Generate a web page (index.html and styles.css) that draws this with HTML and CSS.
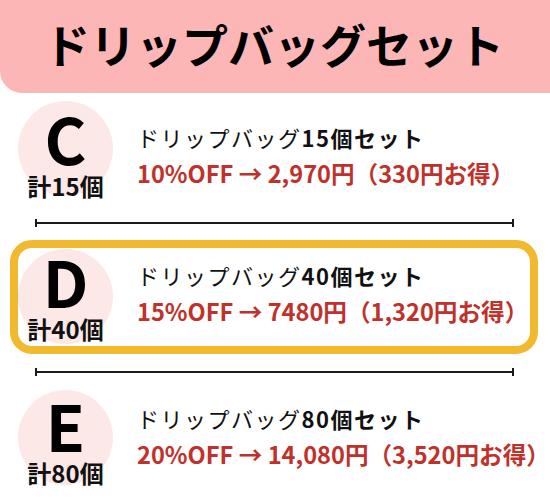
FILE: index.html
```html
<!DOCTYPE html>
<html lang="ja">
<head>
<meta charset="utf-8">
<link rel="stylesheet" href="styles.css">
</head>
<body>
<header class="header"><h1 class="header-title">ドリップバッグセット</h1></header>
<main class="list">
  <section class="row row-c">
    <div class="badge"><span class="badge-letter">C</span><span class="badge-count">計15個</span></div>
    <div class="info">
      <p class="info-title">ドリップバッグ<b>15個セット</b></p>
      <p class="info-price">10%OFF → 2,970円（330円お得）</p>
    </div>
  </section>
  <div class="divider divider-1"></div>
  <section class="row row-d">
    <div class="badge"><span class="badge-letter">D</span><span class="badge-count">計40個</span></div>
    <div class="info">
      <p class="info-title">ドリップバッグ<b>40個セット</b></p>
      <p class="info-price">15%OFF → 7480円（1,320円お得）</p>
    </div>
  </section>
  <div class="divider divider-2"></div>
  <section class="row row-e">
    <div class="badge"><span class="badge-letter">E</span><span class="badge-count">計80個</span></div>
    <div class="info">
      <p class="info-title">ドリップバッグ<b>80個セット</b></p>
      <p class="info-price">20%OFF → 14,080円（3,520円お得）</p>
    </div>
  </section>
</main>
</body>
</html>
```
FILE: styles.css
```css
* { box-sizing: border-box; }
html, body { margin: 0; padding: 0; }
body {
  width: 550px;
  height: 500px;
  overflow: hidden;
  background: #ffffff;
  font-family: "Noto Sans CJK JP", "Noto Sans", sans-serif;
  color: #111111;
}
.header {
  height: 93px;
  background: #fdb6b6;
  border-bottom-left-radius: 22px;
  display: flex;
  align-items: center;
  padding: 0 0 7px 44px;
}
.header-title {
  margin: 0;
  font-size: 46px;
  font-weight: 700;
  line-height: 1;
  color: #000;
}
.list {
  padding: 0 12px 0 10px;
}
.row {
  display: flex;
  align-items: flex-start;
  gap: 24px;
  border: 8px solid transparent;
  border-radius: 22px;
}
.row-d {
  border-color: #f0b92e;
  padding: 1px 0 2px;
}
.badge {
  flex: none;
  width: 95px;
  height: 95px;
  border-radius: 50%;
  background: #fde8e8;
  display: flex;
  flex-direction: column;
  align-items: center;
}
.badge-letter {
  font-size: 64px;
  font-weight: 700;
  line-height: 1;
  margin-top: 4px;
  color: #000;
}
.row-d .badge-letter { margin-top: -1px; }
.row-e .badge-letter { margin-top: 2px; }
.badge-count {
  font-size: 24px;
  font-weight: 700;
  line-height: 1;
  margin-top: 5px;
  white-space: nowrap;
  color: #111;
}
.info p {
  margin: 0;
  white-space: nowrap;
}
.info { padding-top: 25px; }
.row-d .info { padding-top: 15px; }
.row-e .info { padding-top: 17px; }
.info-title {
  font-size: 22px;
  line-height: 1;
  font-weight: 400;
  letter-spacing: 1.5px;
}
.info-title b { font-weight: 700; }
.info .info-price {
  margin-top: 14px;
  font-size: 23.6px;
  line-height: 1;
  font-weight: 700;
  color: #c0312b;
}
.divider {
  height: 8px;
  margin: 0 24px 0 25px;
  border-left: 2px solid #1a1a1a;
  border-right: 2px solid #1a1a1a;
  background: linear-gradient(#1a1a1a, #1a1a1a) center / 100% 2px no-repeat;
}
.divider-1 { margin-top: 15px; margin-bottom: 13px; }
.divider-2 { margin-top: 14px; margin-bottom: 6px; }
```
